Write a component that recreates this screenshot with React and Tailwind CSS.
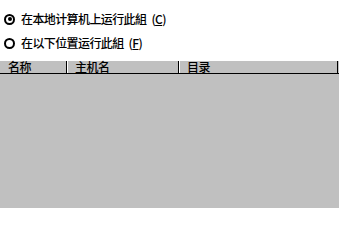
import React from "react";

function Radio({ checked, label, hotkey }) {
  return (
    <div className="flex items-center h-[12px]">
      <span className="ml-[4px] w-[11px] h-[11px] rounded-full border-[2px] border-black flex items-center justify-center">
        {checked && <span className="w-[4px] h-[4px] rounded-full bg-black" />}
      </span>
      <span className="ml-[6px] text-[12px] tracking-[-0.6px] font-medium leading-[12px] text-black">
        {label}
        <span className="ml-[5px]">
          (<u>{hotkey}</u>)
        </span>
      </span>
    </div>
  );
}

export default function App() {
  return (
    <div className="w-[339px] h-[208px] bg-white flex flex-col font-['Noto_Sans_CJK_SC',sans-serif] overflow-hidden">
      <div className="pt-[13px] flex flex-col gap-[12px]">
        <Radio checked label="在本地计算机上运行此組" hotkey="C" />
        <Radio label="在以下位置运行此組" hotkey="F" />
      </div>
      <div className="mt-[12px] flex-1 bg-[#c0c0c0] flex flex-col">
        <div className="h-[13px] flex border-b border-black text-[12px] tracking-[-0.5px] font-medium leading-[12px] text-black">
          <div className="w-[67px] border-r border-black pl-[8px]">名称</div>
          <div className="w-[112px] border-l border-white border-r border-r-black pl-[7px]">主机名</div>
          <div className="w-[159px] border-l border-white border-r border-r-black pl-[7px]">目录</div>
        </div>
        <div className="flex-1" />
      </div>
    </div>
  );
}
